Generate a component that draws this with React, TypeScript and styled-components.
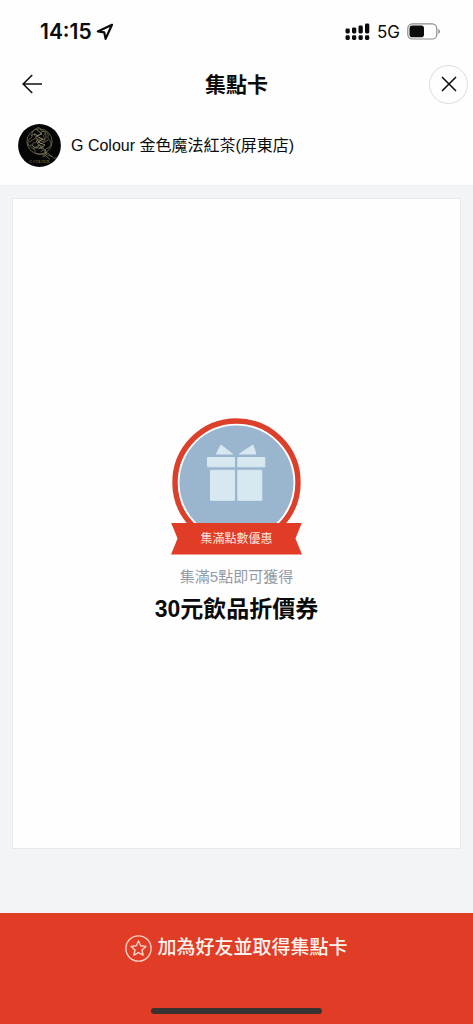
import React from "react";
import styled, { createGlobalStyle } from "styled-components";

const GlobalStyle = createGlobalStyle`
  * { box-sizing: border-box; }
  body {
    margin: 0;
    background: #f2f4f8;
    color: #0b0b0b;
    font-family: "Liberation Sans", "Noto Sans CJK TC", sans-serif;
  }
  h1, h2, p { margin: 0; }
`;

const Screen = styled.div`
  min-height: 100vh;
  display: flex;
  flex-direction: column;
`;

const Header = styled.header`
  background: #fefefe;
  border-bottom: 1px solid #eceef1;
`;

const StatusBar = styled.div`
  height: 62px;
  padding: 1px 32px 0 40px;
  display: flex;
  align-items: center;
  justify-content: space-between;
`;

const StatusGroup = styled.div<{ $gap: number }>`
  display: flex;
  align-items: center;
  gap: ${(p) => p.$gap}px;
`;

const Clock = styled.time`
  font: 600 21px/24px Inter, sans-serif;
`;

const Network = styled.span`
  font: 400 17px/24px Inter, sans-serif;
`;

const NavBar = styled.nav`
  height: 44px;
  padding: 0 5px;
  display: grid;
  grid-template-columns: 1fr auto 1fr;
  align-items: center;
`;

const Title = styled.h1`
  padding-top: 2px;
  font-size: 21px;
  line-height: 32px;
  font-weight: 700;
`;

const IconButton = styled.button`
  padding: 0;
  display: flex;
  align-items: center;
  justify-content: center;
  color: #111;
  background: none;
  border: 0;
`;

const BackButton = styled(IconButton)`
  width: 54px;
  height: 40px;
`;

const CloseButton = styled(IconButton)`
  width: 39px;
  height: 39px;
  justify-self: end;
  border: 1px solid #dcdcdc;
  border-radius: 50%;
`;

const Shop = styled.div`
  height: 79px;
  padding: 0 18px;
  display: flex;
  align-items: center;
  gap: 10px;
`;

const ShopName = styled.p`
  font-size: 16px;
  line-height: 24px;
`;

const Main = styled.main`
  flex: 1;
  padding: 12px 12px 64px;
  display: flex;
`;

const Card = styled.section`
  flex: 1;
  padding-bottom: 5px;
  display: flex;
  flex-direction: column;
  align-items: center;
  justify-content: center;
  text-align: center;
  background: #fefefe;
  border: 1px solid #e7e9ed;
`;

const Badge = styled.div`
  position: relative;
  width: 131px;
  height: 137px;
`;

const Ribbon = styled.p`
  position: absolute;
  left: 0;
  right: 0;
  bottom: 0;
  height: 32px;
  font-size: 12px;
  line-height: 32px;
  color: #fbe3dc;
  background: #e03c26;
  clip-path: polygon(0 0, 100% 0, 95% 50%, 100% 100%, 0 100%, 5% 50%);
`;

const Condition = styled.p`
  margin-top: 12px;
  font-size: 15px;
  line-height: 20px;
  color: #929ba5;
`;

const Reward = styled.h2`
  margin-top: 6px;
  font-size: 23px;
  line-height: 32px;
  font-weight: 700;
`;

const Footer = styled.footer`
  height: 111px;
  background: #e13d26;
  display: flex;
  flex-direction: column;
  align-items: center;
  justify-content: space-between;
  padding-bottom: 10px;
`;

const JoinButton = styled.button`
  width: 100%;
  height: 70px;
  padding: 0;
  display: flex;
  align-items: center;
  justify-content: center;
  gap: 5px;
  border: 0;
  background: none;
  color: #fff3ee;
  font-family: inherit;
  font-size: 19px;
  line-height: 28px;
  font-weight: 500;
`;

const HomeIndicator = styled.div`
  width: 36%;
  height: 6px;
  border-radius: 3px;
  background: #3a3230;
`;

const LocationIcon = () => (
  <svg width="18" height="18" viewBox="0 0 18 18" fill="none" stroke="#0b0b0b" strokeWidth="2.2" strokeLinejoin="round" aria-hidden="true">
    <path d="M16 1.8 1.8 8.4 8.2 9.3 9.6 15.8Z" />
  </svg>
);

const SignalIcon = () => (
  <svg width="25" height="18" viewBox="0 0 25 18" fill="#0b0b0b" aria-hidden="true">
    {[5.5, 4.5, 2.5, 0.5].map((top, i) => (
      <g key={top}>
        <rect x={i * 6.5 + 0.5} y={top} width="4.3" height={10.5 - top} rx="1.4" />
        <rect x={i * 6.5 + 0.5} y="12.3" width="4.3" height="4.7" rx="1.4" />
      </g>
    ))}
  </svg>
);

const BatteryIcon = () => (
  <svg width="34" height="17" viewBox="0 0 34 17" aria-hidden="true">
    <rect x="0.8" y="0.8" width="29" height="15.2" rx="4.6" fill="none" stroke="#8c8c8c" strokeWidth="1.2" />
    <rect x="2.5" y="2.6" width="14.5" height="11.6" rx="2.8" fill="#0b0b0b" />
    <path d="M31.3 6v5q1.7-.6 1.7-2.5T31.3 6Z" fill="#8c8c8c" />
  </svg>
);

const BackIcon = () => (
  <svg width="24" height="24" viewBox="0 0 24 24" fill="none" stroke="currentColor" strokeWidth="1.6" aria-hidden="true">
    <path d="M22 12H3.2M12.2 3 3.2 12l9 9" />
  </svg>
);

const CloseIcon = () => (
  <svg width="18" height="18" viewBox="0 0 18 18" fill="none" stroke="currentColor" strokeWidth="1.6" aria-hidden="true">
    <path d="m2 2 14 14M16 2 2 16" />
  </svg>
);

const ShopLogo = () => (
  <svg width="43" height="43" viewBox="0 0 43 43" role="img" aria-label="G Colour">
    <circle cx="21.5" cy="21.5" r="21.4" fill="#050505" />
    <g fill="none" stroke="#85805f" strokeWidth=".7">
      <circle cx="21.5" cy="17.5" r="12.6" />
      <path d="M21 3.5c-4 1-8 5-7 8s-5 3-4 8 7 4 7 8 6 2 9 3l6 5M21 3.5c3 2 1 4 4 4s6 2 5 5 4 4 3 8-5 3-6 6 2 5 7 6" />
      <path d="M13 12c4-5 7 3 10-3s7 4 4 6-5-2-8 1 5 4 1 7-7-5-8-1M17 9c-2 4 4 5 2 8s-6 1-4 5 7 0 9 3M27 10c-4 2 2 5-1 7s-4-3-6 1 7 3 5 7M11 18l7-4 5 6 7-4M15 25l6-4 7 6M23 28c2-5 8 0 4 4s-2-7 4-2 4 4 8 4" />
      <path d="m19 6 5 4-6 2 7 3-5 3 7 3-6 4" stroke="#aaa27c" />
    </g>
    <text x="21.5" y="39" textAnchor="middle" fontFamily="Liberation Serif, serif" fontSize="4" fill="#9b8b50">G COLOUR</text>
  </svg>
);

const GiftMedal = () => (
  <svg width="131" height="137" viewBox="0 0 131 137" aria-hidden="true">
    <circle cx="65.5" cy="64.5" r="61.5" fill="#fff" stroke="#dd402a" strokeWidth="5.4" />
    <circle cx="65.5" cy="64.5" r="57" fill="#9ab6cf" />
    <g fill="#d8e8f0" stroke="#d8e8f0" strokeWidth="1" strokeLinejoin="round">
      <path d="M45.3 36 50 27 61.5 36ZM68.3 36 82 27 85 36Z" />
      <path d="M36.5 39.5h27v9.3h-27ZM66.8 39.5h27v9.3h-27Z" />
      <path d="M39.5 52.3h24v30h-24ZM66.8 52.3h24v30h-24Z" />
    </g>
  </svg>
);

const StarIcon = () => (
  <svg width="27" height="27" viewBox="0 0 27 27" fill="none" stroke="#ffd3c7" strokeWidth="1.4" strokeLinejoin="round" aria-hidden="true">
    <circle cx="13.5" cy="13.5" r="12.6" />
    <path d="m13.5 6 2.2 4.8 5.2.6-3.9 3.6 1.1 5.2-4.6-2.6-4.6 2.6L10 15l-3.9-3.6 5.2-.6Z" />
  </svg>
);

export default function App() {
  return (
    <Screen>
      <GlobalStyle />
      <Header>
        <StatusBar>
          <StatusGroup $gap={4}>
            <Clock>14:15</Clock>
            <LocationIcon />
          </StatusGroup>
          <StatusGroup $gap={7}>
            <SignalIcon />
            <Network>5G</Network>
            <BatteryIcon />
          </StatusGroup>
        </StatusBar>
        <NavBar>
          <BackButton aria-label="返回"><BackIcon /></BackButton>
          <Title>集點卡</Title>
          <CloseButton aria-label="關閉"><CloseIcon /></CloseButton>
        </NavBar>
        <Shop>
          <ShopLogo />
          <ShopName>G Colour 金色魔法紅茶(屏東店)</ShopName>
        </Shop>
      </Header>
      <Main>
        <Card>
          <Badge>
            <GiftMedal />
            <Ribbon>集滿點數優惠</Ribbon>
          </Badge>
          <Condition>集滿5點即可獲得</Condition>
          <Reward>30元飲品折價券</Reward>
        </Card>
      </Main>
      <Footer>
        <JoinButton>
          <StarIcon />
          加為好友並取得集點卡
        </JoinButton>
        <HomeIndicator />
      </Footer>
    </Screen>
  );
}
